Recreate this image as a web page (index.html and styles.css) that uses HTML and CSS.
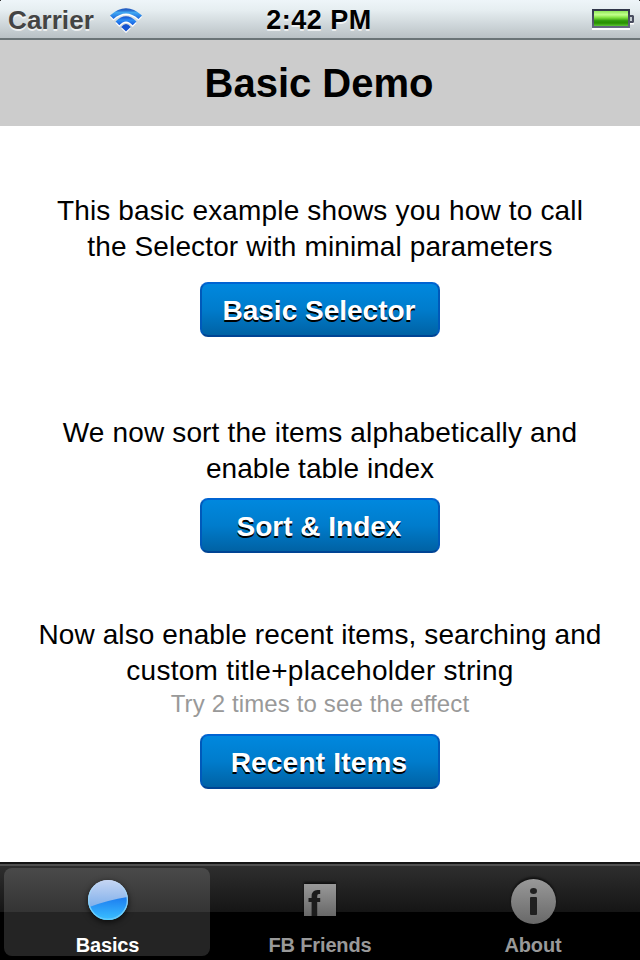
FILE: index.html
```html
<!DOCTYPE html>
<html lang="en">
<head>
<meta charset="utf-8">
<title>Basic Demo</title>
<link rel="stylesheet" href="styles.css">
</head>
<body>
<div class="screen">
  <header class="status">
    <div class="status-left">
      <span class="carrier">Carrier</span>
      <svg class="wifi" width="34" height="28" viewBox="0 0 34 28">
        <defs>
          <linearGradient id="arcOuter" x1="0" y1="0" x2="0" y2="1">
            <stop offset="0" stop-color="#1a4fb8"/><stop offset=".2" stop-color="#2a6fd0"/><stop offset=".4" stop-color="#41a8f2"/><stop offset="1" stop-color="#1c66dc"/>
          </linearGradient>
          <linearGradient id="arcInner" x1="0" y1="0" x2="0" y2="1">
            <stop offset="0" stop-color="#1650cc"/><stop offset=".45" stop-color="#2b8cf4"/><stop offset="1" stop-color="#1458dc"/>
          </linearGradient>
        </defs>
        <g transform="translate(0 1.6)" fill="#fff">
          <path d="M1 7.500Q17-7 33 7.500L29.500 11Q17 0 4.500 11Z"/>
          <path d="M6.500 13.500Q17 3 27.500 13.500L23.700 17.300Q17 9.500 10.300 17.300Z"/>
          <path d="M12.300 19Q17 13 21.700 19L17 23.500Z"/>
        </g>
        <path d="M1 7.500Q17-7 33 7.500L29.500 11Q17 0 4.500 11Z" fill="url(#arcOuter)"/>
        <path d="M6.500 13.500Q17 3 27.500 13.500L23.700 17.300Q17 9.500 10.300 17.300Z" fill="url(#arcInner)"/>
        <path d="M12.300 19Q17 13 21.700 19L17 23.500Z" fill="#1654d0"/>
      </svg>
    </div>
    <span class="time">2:42 PM</span>
    <div class="status-right">
      <svg width="44" height="24" viewBox="0 0 44 24">
        <defs>
          <linearGradient id="charge" x1="0" y1="0" x2="0" y2="1">
            <stop offset="0" stop-color="#8fe858"/><stop offset=".25" stop-color="#c2ff8c"/><stop offset=".45" stop-color="#7ee03c"/><stop offset=".65" stop-color="#2f9a0c"/><stop offset=".8" stop-color="#289000"/><stop offset="1" stop-color="#5cc634"/>
          </linearGradient>
          <linearGradient id="shell" x1="0" y1="0" x2="0" y2="1">
            <stop offset="0" stop-color="#2e3448"/><stop offset="1" stop-color="#666a80"/>
          </linearGradient>
        </defs>
        <path d="M0 20H38V22H0Z" fill="#fff"/>
        <path d="M38 15H42V16.500H38Z" fill="#fff"/>
        <path d="M0 1H38V20H0Z" fill="url(#shell)"/>
        <path d="M38 7H41L42 8V14L41 15H38Z" fill="#4a4e60"/>
        <path d="M38 9H40V13H38Z" fill="#c4ccd0"/>
        <path d="M2 3H36V18H2Z" fill="url(#charge)"/>
      </svg>
    </div>
    <i class="corner corner-left"></i>
    <i class="corner corner-right"></i>
  </header>
  <div class="titlebar"><h1>Basic Demo</h1></div>
  <main>
    <section class="demo first">
      <p><span class="l1">This basic example shows you how to call</span><span class="l2">the Selector with minimal parameters</span></p>
      <button class="b1">Basic Selector</button>
    </section>
    <section class="demo second">
      <p><span class="l3">We now sort the items alphabetically and</span><span class="l4">enable table index</span></p>
      <button class="b2">Sort &amp; Index</button>
    </section>
    <section class="demo third">
      <p><span class="l5">Now also enable recent items, searching and</span><span class="l6">custom title+placeholder string</span></p>
      <small>Try 2 times to see the effect</small>
      <button class="b3">Recent Items</button>
    </section>
  </main>
  <nav class="tabs">
    <a class="tab active">
      <svg width="60" height="60" viewBox="0 0 60 60">
        <defs>
          <linearGradient id="ballTop" x1="0" y1="0" x2="0" y2="1"><stop offset="0" stop-color="#c5d5f3"/><stop offset=".65" stop-color="#82b1eb"/></linearGradient>
          <linearGradient id="ballLow" x1="0" y1="0" x2="0" y2="1"><stop offset="0" stop-color="#1c7cf0"/><stop offset="1" stop-color="#38bcff"/></linearGradient>
          <linearGradient id="ballRim" x1="0" y1="0" x2="0" y2="1"><stop offset="0" stop-color="#c5d5f3"/><stop offset="1" stop-color="#55d0ff"/></linearGradient>
        </defs>
        <circle cx="31" cy="30" r="20" fill="url(#ballTop)"/>
        <path d="M12.400 37Q31 30 50.500 27A20 20 0 0 1 12.400 37Z" fill="url(#ballLow)"/>
        <circle cx="31" cy="30" r="19.400" fill="none" stroke="url(#ballRim)" stroke-width="1.200"/>
      </svg>
      <span>Basics</span>
    </a>
    <a class="tab">
      <svg class="gray" width="60" height="60" viewBox="0 0 60 60">
        <defs><linearGradient id="gray" x1="0" y1="0" x2="0" y2="1"><stop offset="0" stop-color="#999"/><stop offset="1" stop-color="#686868"/></linearGradient></defs>
        <path d="M14 14H46V46H14Z" fill="url(#gray)"/>
        <path d="M21.600 46V32H18.500V28H21.600V26.500Q21.600 20 27.500 20H30.200V24H28.800Q27.200 24 27.200 26V28H30.200V32H27.200V46Z" fill="#1c1c1c"/>
      </svg>
      <span>FB Friends</span>
    </a>
    <a class="tab">
      <svg class="gray" width="60" height="60" viewBox="0 0 60 60">
        <circle cx="30.500" cy="31.500" r="22.500" fill="url(#gray)"/>
        <g fill="#202020"><ellipse cx="30.500" cy="21" rx="3.500" ry="3"/><rect x="27" width="7" y="27" height="18" rx="1"/></g>
      </svg>
      <span>About</span>
    </a>
  </nav>
</div>
</body>
</html>
```
FILE: styles.css
```css
* { box-sizing: border-box; }
body {
  margin: 0;
  background: #fff;
  font-family: "Liberation Sans", Arial, sans-serif;
  color: #000;
}
.screen {
  width: 640px;
  height: 960px;
  display: flex;
  flex-direction: column;
  overflow: hidden;
}
.status {
  position: relative;
  height: 40px;
  display: grid;
  grid-template-columns: 1fr auto 1fr;
  background: linear-gradient(#eef5f9 0, #e6eef1 10px, #b9c1c5 38px);
  border-bottom: 2px solid #6a7477;
  font-size: 26px;
  font-weight: bold;
  line-height: 40px;
  text-shadow: 0 2px 0 rgba(255, 255, 255, .7);
}
.status-left { display: flex; padding-left: 8px; }
.carrier { color: #444; width: 101px; letter-spacing: .1px; }
.time { font-size: 27px; letter-spacing: .5px; padding-right: 2px; line-height: 40px; }
.wifi { margin-top: 8px; }
.status-right { display: flex; justify-content: flex-end; padding: 8px 4px 0 0; }
.corner { position: absolute; top: 0; width: 3px; height: 3px; }
.corner-left { left: 0; background: radial-gradient(circle at 100% 100%, transparent 3px, #333 3.5px); }
.corner-right { right: 0; background: radial-gradient(circle at 0 100%, transparent 3px, #333 3.5px); }
.titlebar { height: 86px; background: #ccc; text-align: center; }
h1 { margin: 0; padding-right: 2px; font-size: 40px; line-height: 86px; }
main { height: 736px; flex: none; }
.demo { display: flex; flex-direction: column; align-items: center; }
.first { padding-top: 67px; height: 289px; }
.second { height: 202px; }
.third { height: 245px; }
p { margin: 0; font-size: 28px; line-height: 36px; text-align: center; white-space: nowrap; }
p span { display: block; }
.l1 { letter-spacing: .16px; }
.l2 { letter-spacing: .13px; }
.l3 { letter-spacing: .15px; }
.l4 { letter-spacing: .05px; }
.l5 { letter-spacing: .1px; }
.l6 { letter-spacing: .27px; }
small { font-size: 24px; line-height: 30px; letter-spacing: .13px; color: #999; }
button {
  width: 240px;
  height: 55px;
  margin: 17px 0 0;
  padding: 2px 2px 0 0;
  border: 2px solid;
  border-color: #0064d2 #0059ba #004494;
  border-radius: 8px;
  background: linear-gradient(#0088de, #007ccc 50%, #0062a4);
  color: #fff;
  font: bold 28px "Liberation Sans", Arial, sans-serif;
  text-shadow: 0 2px 0 #000;
}
.b2 { margin-top: 11px; }
.b3 { margin-top: 15px; letter-spacing: .2px; }
.tabs {
  height: 98px;
  flex: none;
  display: grid;
  grid-template-columns: 214px 212px 214px;
  border-top: 2px solid #151515;
  background: linear-gradient(#505050 0 2px, #2e2e2e 2px, #151515 48px, #000 48px);
}
.tab {
  display: flex;
  flex-direction: column;
  align-items: center;
  padding-top: 6px;
  color: #999;
  font-size: 20px;
  font-weight: bold;
  letter-spacing: -.15px;
}
.tab svg { flex: none; filter: drop-shadow(0 2px 3px rgba(0, 0, 0, .7)); }
.tab svg.gray { filter: drop-shadow(0 -2px 1px rgba(0, 0, 0, .6)); }
.tab span { line-height: 24px; margin-top: 3px; }
.tab.active span { padding-left: 1px; }
.active {
  margin: 4px;
  height: 88px;
  padding-top: 2px;
  border-radius: 8px;
  color: #fff;
  background: linear-gradient(#4a4a4a, #343434 44px, #242424 44px);
}
```
